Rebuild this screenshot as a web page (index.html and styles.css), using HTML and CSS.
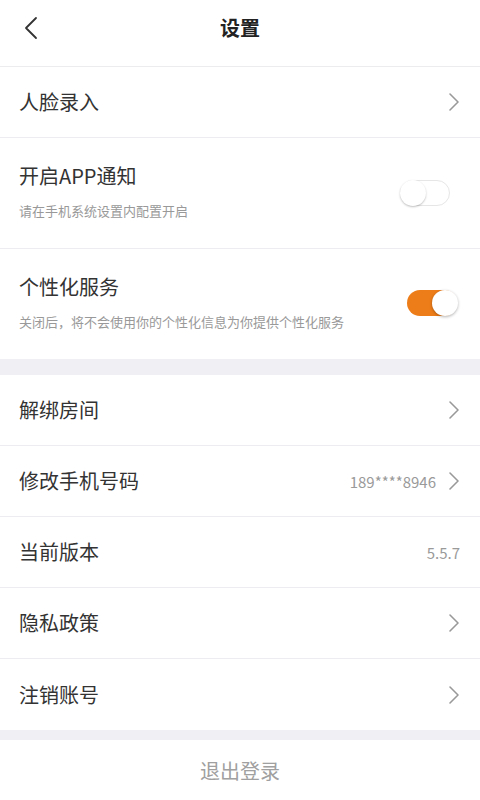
FILE: index.html
```html
<!DOCTYPE html>
<html lang="zh-CN">
<head>
<meta charset="utf-8">
<title>设置</title>
<link rel="stylesheet" href="styles.css">
</head>
<body>
<div class="page">
  <header class="topbar">
    <svg class="back" width="14" height="24" viewBox="0 0 14 24"><path d="M12 2 L2 12 L12 22" fill="none" stroke="#333" stroke-width="1.8" stroke-linecap="round" stroke-linejoin="round"/></svg>
    <h1 class="title">设置</h1>
  </header>

  <section class="group">
    <div class="row">
      <span class="label">人脸录入</span>
      <svg class="chev" width="12" height="20" viewBox="0 0 12 20"><path d="M2 2 L10 10 L2 18" fill="none" stroke="#999" stroke-width="1.6" stroke-linecap="round" stroke-linejoin="round"/></svg>
    </div>
    <div class="row tall">
      <div class="texts">
        <span class="label">开启APP通知</span>
        <span class="sub">请在手机系统设置内配置开启</span>
      </div>
      <span class="switch off"><span class="knob"></span></span>
    </div>
    <div class="row tall last">
      <div class="texts">
        <span class="label">个性化服务</span>
        <span class="sub">关闭后，将不会使用你的个性化信息为你提供个性化服务</span>
      </div>
      <span class="switch on"><span class="knob"></span></span>
    </div>
  </section>

  <section class="group">
    <div class="row">
      <span class="label">解绑房间</span>
      <svg class="chev" width="12" height="20" viewBox="0 0 12 20"><path d="M2 2 L10 10 L2 18" fill="none" stroke="#999" stroke-width="1.6" stroke-linecap="round" stroke-linejoin="round"/></svg>
    </div>
    <div class="row">
      <span class="label">修改手机号码</span>
      <span class="right">
        <span class="value">189****8946</span>
        <svg class="chev" width="12" height="20" viewBox="0 0 12 20"><path d="M2 2 L10 10 L2 18" fill="none" stroke="#999" stroke-width="1.6" stroke-linecap="round" stroke-linejoin="round"/></svg>
      </span>
    </div>
    <div class="row">
      <span class="label">当前版本</span>
      <span class="value">5.5.7</span>
    </div>
    <div class="row">
      <span class="label">隐私政策</span>
      <svg class="chev" width="12" height="20" viewBox="0 0 12 20"><path d="M2 2 L10 10 L2 18" fill="none" stroke="#999" stroke-width="1.6" stroke-linecap="round" stroke-linejoin="round"/></svg>
    </div>
    <div class="row last">
      <span class="label">注销账号</span>
      <svg class="chev" width="12" height="20" viewBox="0 0 12 20"><path d="M2 2 L10 10 L2 18" fill="none" stroke="#999" stroke-width="1.6" stroke-linecap="round" stroke-linejoin="round"/></svg>
    </div>
  </section>

  <div class="logout">退出登录</div>
</div>
</body>
</html>
```

FILE: styles.css
```css
* { box-sizing: border-box; }
html, body { margin: 0; padding: 0; }
body {
  width: 480px;
  height: 800px;
  overflow: hidden;
  background: #efeff4;
  font-family: "Noto Sans CJK SC", "Noto Sans", sans-serif;
  color: #333;
}
.page { display: flex; flex-direction: column; }
.topbar {
  height: 67px;
  background: #fff;
  border-bottom: 1px solid #ececef;
  display: flex;
  align-items: center;
  justify-content: center;
  position: relative;
}
.back { position: absolute; left: 24px; top: 16px; }
.title {
  margin: 0;
  font-size: 20px;
  font-weight: 700;
  color: #222;
  line-height: 1;
  margin-top: -10px;
}
.group {
  background: #fff;
  display: flex;
  flex-direction: column;
}
.group + .group { margin-top: 16px; }
.row {
  height: 71px;
  padding: 0 20px 0 19px;
  display: flex;
  align-items: center;
  justify-content: space-between;
  border-bottom: 1px solid #ececf1;
}
.row.tall { height: 111px; align-items: flex-start; padding-top: 24px; }
.row.last { border-bottom: none; height: 110px; }
.group:last-of-type .row.last { height: 71px; }
.label { font-size: 20px; line-height: 28px; color: #333; }
.texts { display: flex; flex-direction: column; }
.sub { font-size: 13px; color: #999; margin-top: 12px; line-height: 18px; }
.chev { display: block; margin-right: 0; }
.right { display: flex; align-items: center; gap: 12px; }
.value { font-size: 15px; color: #9a9a9a; }
.switch {
  width: 50px;
  height: 26px;
  border-radius: 13px;
  position: relative;
  margin-top: 18px;
}
.switch.off { border: 1px solid #e6e6e6; background: #fff; margin-right: 10px; }
.switch.off .knob {
  position: absolute; left: -1px; top: -1px;
  width: 26px; height: 26px; border-radius: 50%;
  background: #fff;
  box-shadow: 0 1px 2px rgba(0,0,0,0.25);
}
.switch.on { background: #ed7d19; margin-right: 3px; margin-top: 17px; }
.switch.on .knob {
  position: absolute; right: -1px; top: 0;
  width: 26px; height: 26px; border-radius: 50%;
  background: #fff;
  box-shadow: 0 1px 3px rgba(0,0,0,0.3);
}
.logout {
  margin-top: 10px;
  height: 61px;
  background: #fff;
  display: flex;
  align-items: center;
  justify-content: center;
  font-size: 20px;
  color: #a0a0a0;
}
```
